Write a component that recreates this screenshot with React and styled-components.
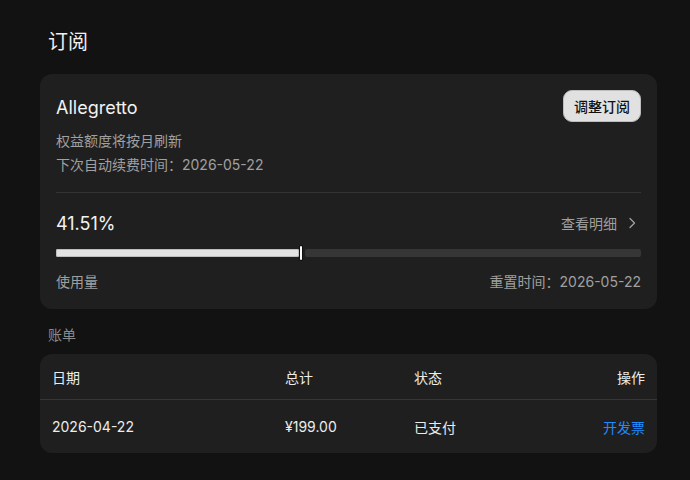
import React from 'react'
import styled, { createGlobalStyle } from 'styled-components'

const GlobalStyle = createGlobalStyle`
  html, body {
    margin: 0;
    padding: 0;
    background: #121212;
  }
  body {
    font-family: Inter, "Noto Sans CJK SC", sans-serif;
    color: #e6e6e6;
  }
`

const Page = styled.div`
  width: 617px;
  padding: 28px 0 24px 40px;
`

const Title = styled.h1`
  margin: 0 0 18px 8px;
  font-size: 20px;
  line-height: 28px;
  font-weight: 400;
  color: #f0f0f0;
`

const Card = styled.section`
  background: #1f1f1f;
  border-radius: 12px;
  padding: ${({ $pad }) => $pad || '16px'};
`

const HeaderRow = styled.div`
  display: flex;
  align-items: center;
  justify-content: space-between;
  height: 32px;
`

const PlanName = styled.div`
  padding-top: 3px;
  font-size: 18px;
  line-height: 26px;
  color: #f2f2f2;
`

const Button = styled.button`
  height: 32px;
  padding: 0 10px;
  border: 1px solid #bdbdbd;
  border-radius: 9px;
  background: #e1e1e1;
  color: #111;
  font-family: inherit;
  font-size: 14px;
  font-weight: 500;
  cursor: pointer;
`

const Info = styled.div`
  margin-top: 7px;
  font-size: 14px;
  line-height: 24px;
  color: #a0a0a0;
`

const Divider = styled.div`
  height: 1px;
  background: #343434;
  margin: 15px 0 16px;
`

const SplitRow = styled.div`
  display: flex;
  align-items: center;
  justify-content: space-between;
`

const Percent = styled.div`
  padding-top: 2px;
  font-size: 18px;
  line-height: 26px;
  color: #f2f2f2;
`

const DetailLink = styled.a`
  display: flex;
  align-items: center;
  gap: 4px;
  font-size: 14px;
  color: #a0a0a0;
  cursor: pointer;
`

const Bar = styled.div`
  display: flex;
  align-items: center;
  height: 16px;
  margin: 8px 0 10px;
`

const Fill = styled.div`
  height: 8px;
  background: #e2e2e2;
  border-radius: 2px;
  box-shadow: inset 0 0 0 1px #bdbdbd;
`

const Marker = styled.div`
  width: 2px;
  height: 14px;
  margin: 0 3px 0 1px;
  background: #fafafa;
  border-radius: 1px;
  box-shadow: 0 0 0 1px #111;
`

const Track = styled.div`
  flex: 1;
  height: 8px;
  background: #363636;
  border-radius: 2px;
`

const Muted = styled.div`
  font-size: 14px;
  line-height: 22px;
  color: #a0a0a0;
`

const SectionLabel = styled.div`
  margin: 15px 0 8px 8px;
  font-size: 14px;
  line-height: 22px;
  color: #8a8a8a;
`

const Row = styled.div`
  display: grid;
  grid-template-columns: 233px 129px 1fr auto;
  align-items: center;
  height: ${({ $h }) => $h}px;
  padding: 0 12px;
  font-size: 14px;
  color: #ececec;
  border-top: ${({ $line }) => ($line ? '1px solid #363636' : 'none')};
`

const Action = styled.a`
  color: #1e8bff;
  cursor: pointer;
`

const usage = 41.51

export default function App() {
  return (
    <>
      <GlobalStyle />
      <Page>
        <Title>订阅</Title>
        <Card>
          <HeaderRow>
            <PlanName>Allegretto</PlanName>
            <Button>调整订阅</Button>
          </HeaderRow>
          <Info>
            <div>权益额度将按月刷新</div>
            <div>下次自动续费时间：2026-05-22</div>
          </Info>
          <Divider />
          <SplitRow>
            <Percent>{usage}%</Percent>
            <DetailLink>
              查看明细
              <svg width="20" height="12" viewBox="0 0 20 12" fill="none">
                <path d="M9 1.5 L13.5 6 L9 10.5" stroke="#a0a0a0" strokeWidth="1.3" strokeLinecap="round" strokeLinejoin="round" />
              </svg>
            </DetailLink>
          </SplitRow>
          <Bar>
            <Fill style={{ width: `${usage}%` }} />
            <Marker />
            <Track />
          </Bar>
          <SplitRow>
            <Muted>使用量</Muted>
            <Muted>重置时间：2026-05-22</Muted>
          </SplitRow>
        </Card>
        <SectionLabel>账单</SectionLabel>
        <Card $pad="0">
          <Row $h={45}>
            <span>日期</span>
            <span>总计</span>
            <span>状态</span>
            <span>操作</span>
          </Row>
          <Row $h={53} $line>
            <span>2026-04-22</span>
            <span>¥199.00</span>
            <span>已支付</span>
            <Action>开发票</Action>
          </Row>
        </Card>
      </Page>
    </>
  )
}
